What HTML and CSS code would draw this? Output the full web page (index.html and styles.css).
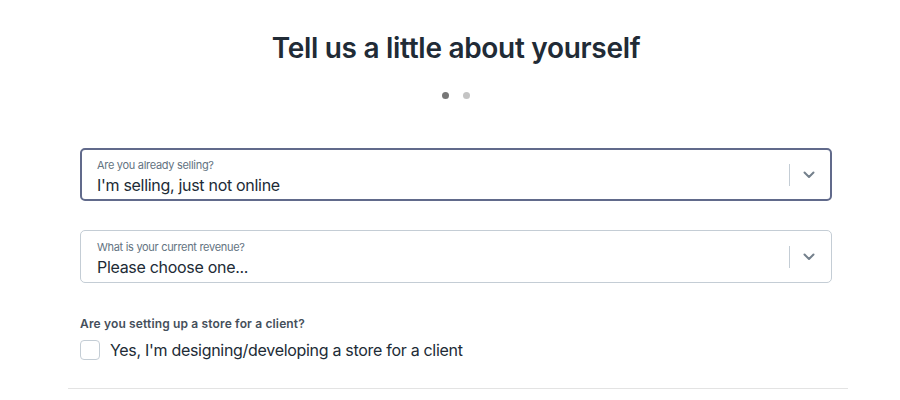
FILE: index.html
```html
<!DOCTYPE html>
<html>
<head>
  <meta charset="utf-8">
  <link rel="stylesheet" href="styles.css">
</head>
<body>
  <main class="page">
    <div class="content">
      <h1 class="title">Tell us a little about yourself</h1>
      <div class="steps">
        <span class="dot dot-active"></span>
        <span class="dot"></span>
      </div>

      <div class="select select-focused">
        <div class="select-text">
          <span class="select-label">Are you already selling?</span>
          <span class="select-value">I'm selling, just not online</span>
        </div>
        <span class="select-sep"></span>
        <svg class="chevron" width="12" height="8" viewBox="0 0 12 8"><path d="M1.5 1.5 6 6l4.5-4.5" fill="none" stroke="currentColor" stroke-width="2" stroke-linecap="round" stroke-linejoin="round"/></svg>
      </div>

      <div class="select">
        <div class="select-text">
          <span class="select-label">What is your current revenue?</span>
          <span class="select-value">Please choose one...</span>
        </div>
        <span class="select-sep"></span>
        <svg class="chevron" width="12" height="8" viewBox="0 0 12 8"><path d="M1.5 1.5 6 6l4.5-4.5" fill="none" stroke="currentColor" stroke-width="2" stroke-linecap="round" stroke-linejoin="round"/></svg>
      </div>

      <div class="client">
        <div class="client-question">Are you setting up a store for a client?</div>
        <label class="check">
          <span class="check-box"></span>
          <span class="check-text">Yes, I'm designing/developing a store for a client</span>
        </label>
      </div>
    </div>
    <hr class="rule">
  </main>
</body>
</html>
```

FILE: styles.css
```css
body {
  margin: 0;
  font-family: Inter, "Noto Sans", sans-serif;
  color: #212b36;
  background: #fff;
}
.page {
  width: 780px;
  margin-left: 68px;
}
.content {
  padding: 0 16px 0 12px;
}
.title {
  margin: 0;
  padding-top: 31px;
  font-size: 28px;
  line-height: 34px;
  font-weight: 600;
  text-align: center;
  letter-spacing: -0.3px;
  color: #212b36;
}
.steps {
  display: flex;
  justify-content: center;
  gap: 14px;
  margin-top: 27px;
}
.dot {
  width: 7px;
  height: 7px;
  border-radius: 50%;
  background: #c4c4c4;
}
.dot-active {
  background: #777;
}
.select {
  display: flex;
  align-items: center;
  box-sizing: border-box;
  height: 53px;
  margin-top: 29px;
  padding: 0 16px 0 16px;
  border: 1px solid #c4cdd5;
  border-radius: 5px;
}
.steps + .select {
  margin-top: 49px;
}
.select-focused {
  border: 2px solid #616a8b;
  padding-left: 15px;
  padding-right: 15px;
}
.select-text {
  flex: 1;
  display: flex;
  flex-direction: column;
  padding-top: 3px;
}
.select-label {
  font-size: 11px;
  line-height: 14px;
  letter-spacing: -0.3px;
  color: #637381;
}
.select-value {
  margin-top: 3px;
  font-size: 16px;
  line-height: 20px;
  letter-spacing: -0.3px;
  color: #212b36;
}
.select-sep {
  width: 1px;
  height: 22px;
  background: #c4cdd5;
  margin-right: 13px;
}
.chevron {
  color: #74808c;
}
.client {
  margin-top: 33px;
}
.client-question {
  font-size: 12px;
  line-height: 16px;
  font-weight: 600;
  letter-spacing: 0.15px;
  color: #454f5b;
}
.check {
  display: flex;
  align-items: center;
  gap: 10px;
  margin-top: 8px;
}
.check-box {
  box-sizing: border-box;
  width: 20px;
  height: 20px;
  border: 1px solid #c4cdd5;
  border-radius: 4px;
}
.check-text {
  font-size: 16px;
  line-height: 20px;
  letter-spacing: -0.3px;
}
.rule {
  margin: 28px 0 0;
  border: 0;
  border-top: 1px solid #e3e3e3;
}
```
